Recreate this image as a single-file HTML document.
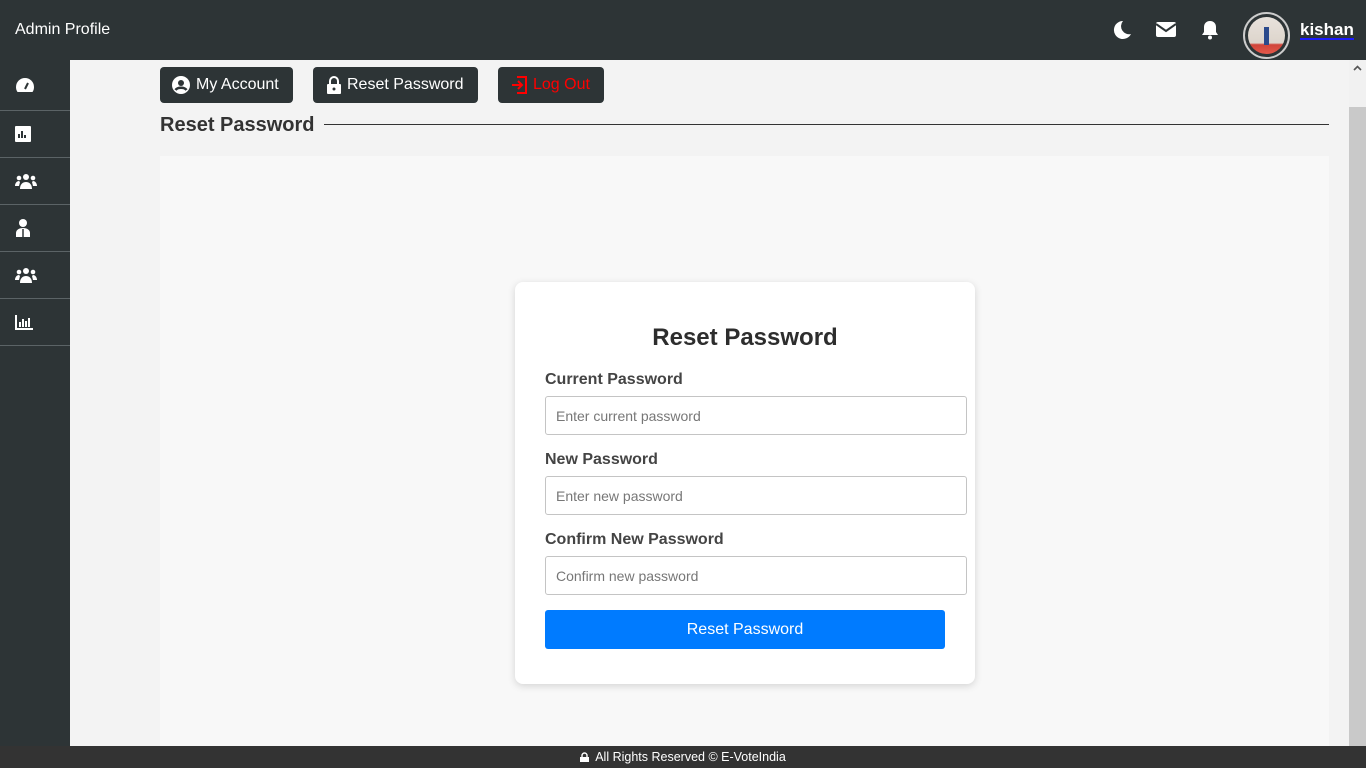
<!DOCTYPE html>
<html><head><meta charset="utf-8"><style>
*{box-sizing:border-box;margin:0;padding:0}
body{width:1366px;height:768px;overflow:hidden;font-family:"Liberation Sans",sans-serif;background:#f3f3f3;position:relative}
.top{position:absolute;left:0;top:0;width:1366px;height:60px;background:#2d3436;color:#fff}
.top .t{position:absolute;left:15px;top:21px;font-size:16px}
.side{position:absolute;left:0;top:60px;width:70px;height:686px;background:#2d3436}
.side div{height:47px;border-bottom:1px solid #5b6366;display:flex;align-items:center;padding-left:15px}
.side div:first-child{height:51px}
.btn{position:absolute;top:67px;height:36px;background:#2d3436;border-radius:4px;color:#fff;font-size:16px;display:flex;align-items:center;padding-left:12px;gap:6px}
.hdr{position:absolute;left:160px;top:114px;font-size:20px;font-weight:bold;color:#333}
.line{position:absolute;left:324px;top:124px;width:1005px;height:1px;background:#333}
.panel{position:absolute;left:160px;top:156px;width:1169px;height:590px;background:#f8f8f8}
.card{position:absolute;left:515px;top:282px;width:460px;height:402px;background:#fff;border-radius:8px;box-shadow:0 2px 8px rgba(0,0,0,.15)}
.card h2{position:absolute;left:0;width:460px;top:42px;text-align:center;font-size:24px;color:#2d2d2d}
.lab{position:absolute;left:30px;font-size:16px;font-weight:bold;color:#444}
.inp{position:absolute;left:30px;width:422px;height:39px;border:1px solid #c4c4c4;border-radius:3px;font-size:14px;color:#777;padding:11px 10px}
.sub{position:absolute;left:30px;top:328px;width:400px;height:39px;background:#007bff;border-radius:3px;color:#fff;font-size:16px;text-align:center;line-height:40px}
.foot{position:absolute;left:0;top:746px;width:1366px;height:22px;background:#333;color:#fff;font-size:12.5px;text-align:center;line-height:22px}
.sb{position:absolute;left:1349px;top:60px;width:17px;height:686px;background:#f1f1f1}
.sb .th{position:absolute;top:47px;left:0;width:17px;height:639px;background:#c9c9c9}
</style></head><body>
<div class="top"><span class="t">Admin Profile</span>
<svg style="position:absolute;left:1112px;top:20px" width="20" height="20" viewBox="0 0 20 20"><path d="M11 1a9 9 0 1 0 8 13A8 8 0 0 1 11 1z" fill="#fff"/></svg>
<svg style="position:absolute;left:1156px;top:22px" width="20" height="15" viewBox="0 0 20 15"><rect width="20" height="15" rx="2" fill="#fff"/><path d="M0 2l10 7 10-7" stroke="#2d3436" stroke-width="2" fill="none"/></svg>
<svg style="position:absolute;left:1201px;top:20px" width="18" height="20" viewBox="0 0 18 20"><path d="M9 1c-4 0-6 3-6 6v5l-2 3h16l-2-3V7c0-3-2-6-6-6z" fill="#fff"/><circle cx="9" cy="17.5" r="2" fill="#fff"/></svg>
<div style="position:absolute;left:1243px;top:12px;width:47px;height:47px;border-radius:50%;border:2px solid #ccc;padding:3px"><div style="width:100%;height:100%;border-radius:50%;background:linear-gradient(#e8e2dc 0,#ddd5cc 70%,#d0453a 75%,#e3584a 100%);position:relative"><div style="position:absolute;left:16px;top:10px;width:5px;height:18px;background:#2b4a8c"></div></div></div>
<span style="position:absolute;left:1300px;top:21px;font-size:17px;font-weight:bold;border-bottom:2px solid #1a1aff;line-height:17px">kishan</span>
</div>
<div class="side">
<div><svg width="20" height="16" viewBox="0 0 20 16"><path d="M10 1a9 9 0 0 0-9 9c0 2 .5 3.5 1.5 5h15c1-1.5 1.5-3 1.5-5a9 9 0 0 0-9-9z" fill="#fff"/><path d="M10 12l3-6" stroke="#2d3436" stroke-width="2"/></svg></div>
<div><svg width="16" height="16"><rect width="16" height="16" rx="1" fill="#fff"/><path d="M4 12V8M7 12V5M10 12V9" stroke="#2d3436" stroke-width="2"/></svg></div>
<div><svg width="22" height="16" viewBox="0 0 22 16"><circle cx="11" cy="4" r="3" fill="#fff"/><circle cx="4" cy="5" r="2.3" fill="#fff"/><circle cx="18" cy="5" r="2.3" fill="#fff"/><path d="M5 16c0-5 3-7 6-7s6 2 6 7zM0 13c0-3 2-5 4-5l1 1-1 4zM22 13c0-3-2-5-4-5l-1 1 1 4z" fill="#fff"/></svg></div>
<div><svg width="16" height="18" viewBox="0 0 16 18"><circle cx="8" cy="4" r="4" fill="#fff"/><path d="M1 18v-4c0-3 3-5 7-5s7 2 7 5v4z" fill="#fff"/><path d="M8 10v8" stroke="#2d3436" stroke-width="1.5"/></svg></div>
<div><svg width="22" height="16" viewBox="0 0 22 16"><circle cx="11" cy="4" r="3" fill="#fff"/><circle cx="4" cy="5" r="2.3" fill="#fff"/><circle cx="18" cy="5" r="2.3" fill="#fff"/><path d="M5 16c0-5 3-7 6-7s6 2 6 7zM0 13c0-3 2-5 4-5l1 1-1 4zM22 13c0-3-2-5-4-5l-1 1 1 4z" fill="#fff"/></svg></div>
<div><svg width="18" height="15"><path d="M1 0v14h17" stroke="#fff" stroke-width="2" fill="none"/><path d="M5 12V7M8 12V4M11 12V6M14 12V3" stroke="#fff" stroke-width="2"/></svg></div>
</div>
<div class="btn" style="left:160px;width:133px"><svg width="18" height="18"><circle cx="9" cy="9" r="9" fill="#fff"/><circle cx="9" cy="7" r="3" fill="#2d3436"/><path d="M3.5 14c2-3 9-3 11 0" stroke="#2d3436" stroke-width="2.5" fill="none"/></svg>My Account</div>
<div class="btn" style="left:313px;width:165px;padding-left:14px"><svg width="14" height="18"><path d="M3 8V5a4 4 0 0 1 8 0v3" stroke="#fff" stroke-width="2" fill="none"/><rect y="8" width="14" height="10" rx="1" fill="#fff"/><circle cx="7" cy="13" r="1.5" fill="#2d3436"/></svg>Reset Password</div>
<div class="btn" style="left:498px;width:106px;color:#f00;padding-left:13px"><svg width="16" height="18"><path d="M6 1h9v16H6M1 9h9M7 5l4 4-4 4" stroke="#f00" stroke-width="2" fill="none"/></svg>Log Out</div>
<div class="hdr">Reset Password</div><div class="line"></div>
<div class="panel"></div>
<div class="card"><h2>Reset Password</h2>
<div class="lab" style="top:89px">Current Password</div><div class="inp" style="top:114px">Enter current password</div>
<div class="lab" style="top:169px">New Password</div><div class="inp" style="top:194px">Enter new password</div>
<div class="lab" style="top:249px">Confirm New Password</div><div class="inp" style="top:274px">Confirm new password</div>
<div class="sub">Reset Password</div></div>
<div class="sb"><div class="th"></div><svg style="position:absolute;left:4px;top:5px" width="9" height="6"><path d="M1 5l3.5-3.5L8 5" stroke="#555" stroke-width="1.6" fill="none"/></svg></div>
<div class="foot"><svg width="9" height="10" style="vertical-align:-1px;margin-right:6px"><path d="M2 5V3.5a2.5 2.5 0 0 1 5 0V5" stroke="#fff" stroke-width="1.4" fill="none"/><rect y="5" width="9" height="5" fill="#fff"/></svg>All Rights Reserved © E-VoteIndia</div>
</body></html>
